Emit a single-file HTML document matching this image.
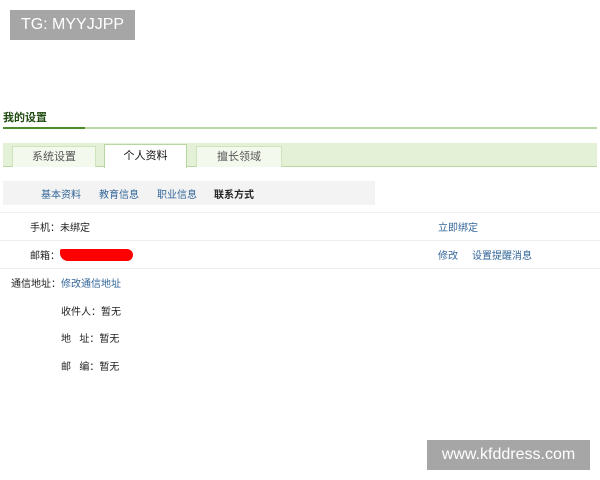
<!DOCTYPE html>
<html><head><meta charset="utf-8"><style>
body{margin:0;width:600px;height:480px;background:#fff;position:relative;font-family:"Liberation Sans","Noto Sans CJK SC",sans-serif;overflow:hidden}
.a{position:absolute;white-space:nowrap}
.t{font-size:10px;color:#222}
.l{color:#336699}
</style></head><body>
<div class="a" style="left:10px;top:10px;width:125px;height:30px;background:#a6a6a6;color:#fff;font-size:16px;line-height:30px;text-align:center">TG: MYYJJPP</div>
<div class="a" style="left:3px;top:109px;font-size:11px;font-weight:bold;color:#1f4a10">我的设置</div>
<div class="a" style="left:3px;top:127px;width:594px;height:2px;background:#b9d9a4"></div>
<div class="a" style="left:3px;top:127px;width:82px;height:2px;background:#4e8a2e"></div>
<div class="a" style="left:3px;top:143px;width:594px;height:23px;background:#e4f1d6;border-bottom:1px solid #b8d7a0"></div>
<div class="a" style="left:12px;top:146px;width:82px;height:20px;background:#f4f9ee;border:1px solid #cfe3bd;border-bottom:none;font-size:11px;color:#555;text-align:center;line-height:20px">系统设置</div>
<div class="a" style="left:104px;top:144px;width:81px;height:23px;background:#fff;border:1px solid #b8d7a0;border-bottom:none;font-size:11px;color:#111;text-align:center;line-height:22px">个人资料</div>
<div class="a" style="left:196px;top:146px;width:84px;height:20px;background:#f4f9ee;border:1px solid #cfe3bd;border-bottom:none;font-size:11px;color:#555;text-align:center;line-height:20px">擅长领域</div>
<div class="a" style="left:3px;top:181px;width:372px;height:24px;background:#f3f3f3"></div>
<div class="a t l" style="left:41px;top:186px">基本资料</div>
<div class="a t l" style="left:99px;top:186px">教育信息</div>
<div class="a t l" style="left:157px;top:186px">职业信息</div>
<div class="a t" style="left:214px;top:186px;font-weight:bold">联系方式</div>
<div class="a" style="left:0;top:212px;width:600px;height:1px;background:#f0f0f0"></div>
<div class="a t" style="left:30px;top:219px">手机：未绑定</div>
<div class="a t l" style="left:438px;top:219px">立即绑定</div>
<div class="a" style="left:0;top:240px;width:600px;height:1px;background:#eee"></div>
<div class="a t" style="left:30px;top:247px">邮箱：</div>
<div class="a" style="left:60px;top:249px;width:73px;height:12px;background:#f00;border-radius:2px 6px 6px 8px"></div>
<div class="a t l" style="left:438px;top:247px">修改</div>
<div class="a t l" style="left:472px;top:247px">设置提醒消息</div>
<div class="a" style="left:0;top:268px;width:600px;height:1px;background:#eee"></div>
<div class="a t" style="left:11px;top:275px">通信地址：<span class="l">修改通信地址</span></div>
<div class="a t" style="left:61px;top:303px">收件人：暂无</div>
<div class="a t" style="left:61px;top:330px">地&nbsp;&nbsp;&nbsp;址：暂无</div>
<div class="a t" style="left:61px;top:358px">邮&nbsp;&nbsp;&nbsp;编：暂无</div>
<div class="a" style="left:427px;top:440px;width:163px;height:30px;background:#a6a6a6;color:#fff;font-size:16px;line-height:30px;text-align:center">www.kfddress.com</div>
</body></html>
